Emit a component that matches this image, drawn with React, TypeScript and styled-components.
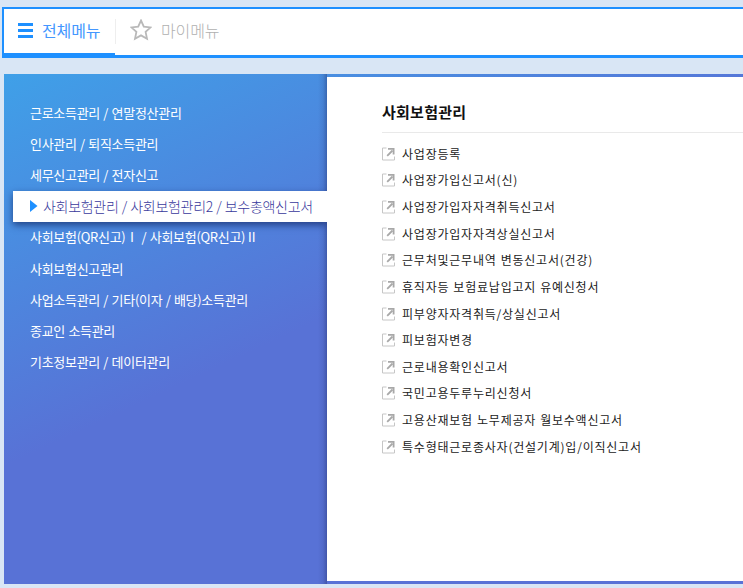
import React from 'react';
import styled, { createGlobalStyle } from 'styled-components';

const categories = [
  '근로소득관리 / 연말정산관리',
  '인사관리 / 퇴직소득관리',
  '세무신고관리 / 전자신고',
  '사회보험관리 / 사회보험관리2 / 보수총액신고서',
  '사회보험(QR신고)Ⅰ / 사회보험(QR신고)Ⅱ',
  '사회보험신고관리',
  '사업소득관리 / 기타(이자 / 배당)소득관리',
  '종교인 소득관리',
  '기초정보관리 / 데이터관리',
];

const links = [
  '사업장등록',
  '사업장가입신고서(신)',
  '사업장가입자자격취득신고서',
  '사업장가입자자격상실신고서',
  '근무처및근무내역 변동신고서(건강)',
  '휴직자등 보험료납입고지 유예신청서',
  '피부양자자격취득/상실신고서',
  '피보험자변경',
  '근로내용확인신고서',
  '국민고용두루누리신청서',
  '고용산재보험 노무제공자 월보수액신고서',
  '특수형태근로종사자(건설기계)입/이직신고서',
];

const App: React.FC = () => {
  const selected = 3;

  return (
    <>
      <GlobalStyle />
      <Page>
        <TabBar>
          <Tab $active>
            <MenuIcon />
            <span>전체메뉴</span>
          </Tab>
          <Divider />
          <Tab>
            <StarIcon />
            <span>마이메뉴</span>
          </Tab>
        </TabBar>
        <Panel>
          <Sidebar>
            {categories.map((label, i) => (
              <Category key={label} $active={i === selected}>
                {i === selected && <Arrow />}
                <span>{label}</span>
              </Category>
            ))}
          </Sidebar>
          <Content>
            <Title>사회보험관리</Title>
            <LinkList>
              {links.map((label) => (
                <LinkRow key={label}>
                  <OpenIcon />
                  <span>{label}</span>
                </LinkRow>
              ))}
            </LinkList>
          </Content>
        </Panel>
      </Page>
    </>
  );
};

const MenuIcon = () => (
  <svg width="15" height="15" viewBox="0 0 15 15" fill="#1e90ff">
    <rect width="15" height="3" />
    <rect y="6" width="15" height="3" />
    <rect y="12" width="15" height="3" />
  </svg>
);

const StarIcon = () => (
  <svg width="22" height="22" viewBox="0 0 22 22" fill="none" stroke="#b9b9b9" strokeWidth="1.8">
    <path d="M11 1.5L13.8 7.6L20.6 8.4L15.6 12.9L17 19.8L11 16.4L5 19.8L6.4 12.9L1.4 8.4L8.2 7.6Z" />
  </svg>
);

const Arrow = () => (
  <svg width="8" height="12" viewBox="0 0 8 12" fill="#1e90ff">
    <path d="M0 0L7.5 6L0 12Z" />
  </svg>
);

const OpenIcon = () => (
  <svg width="13" height="14" viewBox="0 0 13 14" fill="none">
    <path d="M4.5 1H0.5V13H12.5V9.5" stroke="#c6c6c6" />
    <path d="M5.2 8.8L10.5 3.5" stroke="#a8a8a8" strokeWidth="1.8" />
    <path d="M6 1.8H11.6V7.5" stroke="#a8a8a8" strokeWidth="1.8" />
  </svg>
);

const GlobalStyle = createGlobalStyle`
  * {
    box-sizing: border-box;
  }

  body {
    margin: 0;
    overflow: hidden;
    background: #d9e6f5;
    font-family: 'Noto Sans CJK KR', sans-serif;
  }
`;

const Page = styled.div`
  height: 588px;
  padding: 7px 0 0 2px;
  overflow: hidden;
`;

const TabBar = styled.nav`
  display: flex;
  height: 51px;
  border: solid #1e90ff;
  border-width: 2px 0 3px 2px;
  background: #fff;
`;

const Tab = styled.div<{ $active?: boolean }>`
  display: flex;
  align-items: center;
  gap: 9px;
  width: ${(p) => (p.$active ? 111 : 120)}px;
  padding: 0 0 ${(p) => (p.$active ? 2 : 4)}px 14px;
  border-bottom: ${(p) => (p.$active ? '2px solid #1e90ff' : '0')};
  color: ${(p) => (p.$active ? '#4497ff' : '#b0b0b0')};
  font-size: 16px;
  font-weight: ${(p) => (p.$active ? 400 : 300)};
  letter-spacing: -0.1px;
  line-height: 20px;
  white-space: nowrap;

  svg {
    flex: none;
  }
`;

const Divider = styled.div`
  width: 1px;
  height: 25px;
  margin-top: 10px;
  background: #eee;
`;

const Panel = styled.main`
  display: flex;
  height: 510px;
  margin: 16px 0 0 2px;
  padding: 3px 0;
  background: linear-gradient(155deg, #3fa0e8 0%, #5872d6 46%, #5872d6 100%);
`;

const Sidebar = styled.ul`
  width: 323px;
  height: 510px;
  flex: none;
  margin: -3px 0;
  padding: 23px 0 0;
  list-style: none;
  background: linear-gradient(to left, rgba(25, 35, 90, 0.36), rgba(25, 35, 90, 0.1) 4px, transparent 9px);
`;

const Category = styled.li<{ $active: boolean }>`
  display: flex;
  align-items: center;
  gap: 5px;
  height: 31.2px;
  margin-left: ${(p) => (p.$active ? 9 : 0)}px;
  padding: 0 0 1px ${(p) => (p.$active ? 17 : 26)}px;
  background: ${(p) => (p.$active ? '#fff' : 'transparent')};
  color: ${(p) => (p.$active ? '#38389c' : '#fff')};
  box-shadow: ${(p) => (p.$active ? '0 3px 7px rgba(15, 35, 95, 0.7)' : 'none')};
  clip-path: ${(p) => (p.$active ? 'inset(-10px 0 -14px -10px)' : 'none')};
  font-size: ${(p) => (p.$active ? 14 : 13)}px;
  font-weight: ${(p) => (p.$active ? 300 : 400)};
  letter-spacing: -0.3px;
  word-spacing: ${(p) => (p.$active ? 0.5 : 0.8)}px;
  white-space: nowrap;
`;

const Content = styled.section`
  flex: 1;
  padding: 22px 0 0 55px;
  background: #fff;
`;

const Title = styled.h2`
  height: 34px;
  margin: 0;
  border-bottom: 1px solid #e9e9e9;
  color: #111;
  font-size: 15px;
  font-weight: 700;
  letter-spacing: 0.25px;
  line-height: 26px;
`;

const LinkList = styled.ul`
  margin: 0;
  padding: 7px 0 0;
  list-style: none;
`;

const LinkRow = styled.li`
  display: flex;
  align-items: center;
  gap: 7px;
  height: 26.64px;
  color: #222;
  font-size: 12px;
  letter-spacing: 0.78px;
  word-spacing: 0.6px;
  white-space: nowrap;

  svg {
    flex: none;
    margin-top: 1px;
  }
`;

export default App;
